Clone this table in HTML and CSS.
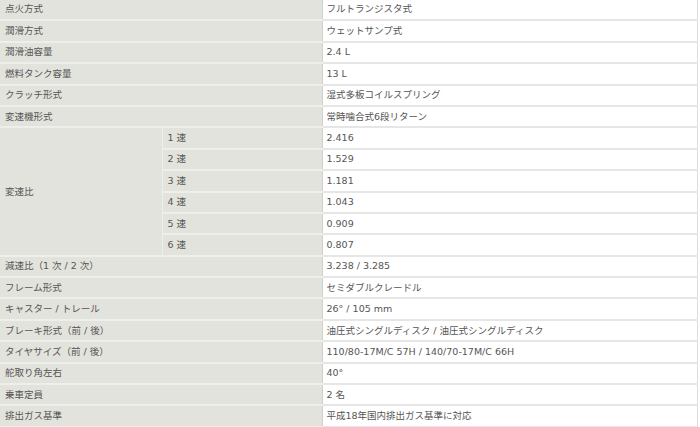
FILE: index.html
```html
<!DOCTYPE html>
<html lang="ja">
  <head>
    <meta charset="UTF-8" />
    <meta name="viewport" content="width=device-width, initial-scale=1.0" />
    <title>主要諸元</title>
    <link rel="stylesheet" href="styles.css">
  </head>
  <body>
    <table class="spec">
      <colgroup>
        <col class="c-label" />
        <col class="c-sub" />
        <col class="c-value" />
      </colgroup>
      <tr><th colspan="2">点火方式</th><td>フルトランジスタ式</td></tr>
      <tr><th colspan="2">潤滑方式</th><td>ウェットサンプ式</td></tr>
      <tr><th colspan="2">潤滑油容量</th><td>2.4 L</td></tr>
      <tr><th colspan="2">燃料タンク容量</th><td>13 L</td></tr>
      <tr><th colspan="2">クラッチ形式</th><td>湿式多板コイルスプリング</td></tr>
      <tr><th colspan="2">変速機形式</th><td>常時噛合式6段リターン</td></tr>
      <tr><th rowspan="6">変速比</th><th class="sub">1 速</th><td>2.416</td></tr>
      <tr><th class="sub">2 速</th><td>1.529</td></tr>
      <tr><th class="sub">3 速</th><td>1.181</td></tr>
      <tr><th class="sub">4 速</th><td>1.043</td></tr>
      <tr><th class="sub">5 速</th><td>0.909</td></tr>
      <tr><th class="sub">6 速</th><td>0.807</td></tr>
      <tr><th colspan="2">減速比（1 次 / 2 次）</th><td>3.238 / 3.285</td></tr>
      <tr><th colspan="2">フレーム形式</th><td>セミダブルクレードル</td></tr>
      <tr><th colspan="2">キャスター / トレール</th><td>26° / 105 mm</td></tr>
      <tr><th colspan="2">ブレーキ形式（前 / 後）</th><td>油圧式シングルディスク / 油圧式シングルディスク</td></tr>
      <tr><th colspan="2">タイヤサイズ（前 / 後）</th><td>110/80-17M/C 57H / 140/70-17M/C 66H</td></tr>
      <tr><th colspan="2">舵取り角左右</th><td>40°</td></tr>
      <tr><th colspan="2">乗車定員</th><td>2 名</td></tr>
      <tr><th colspan="2">排出ガス基準</th><td>平成18年国内排出ガス基準に対応</td></tr>
    </table>
  </body>
</html>
```

FILE: styles.css
```css
body {
  margin: 0;
  background-color: #fff;
  font-family: "DejaVu Sans", "Noto Sans CJK JP", sans-serif;
  font-size: 9px;
  color: #555;
}

/* spec table */
.spec {
  width: 698px;
  margin-top: -1px;
  border-collapse: collapse;
  table-layout: fixed;
}

.spec .c-label {
  width: 162px;
}

.spec .c-sub {
  width: 160px;
}

.spec tr {
  height: 21.4px;
}

.spec th,
.spec td {
  padding: 0 4px;
  font-weight: normal;
  font-size: 9.5px;
  text-align: left;
  vertical-align: middle;
  line-height: 12px;
  border-bottom: 2px solid #e6e6e6;
}

.spec th {
  padding-left: 5px;
  background-color: #e3e3dd;
  border-bottom-color: #eeeeea;
  border-right: 1px solid #eeeeea;
}

.spec th.sub,
.spec th[colspan] {
  border-right: 1px solid #cfcfcb;
}

.spec td {
  background-color: #fff;
  border-right: 1px solid #dcdcdc;
}
```
